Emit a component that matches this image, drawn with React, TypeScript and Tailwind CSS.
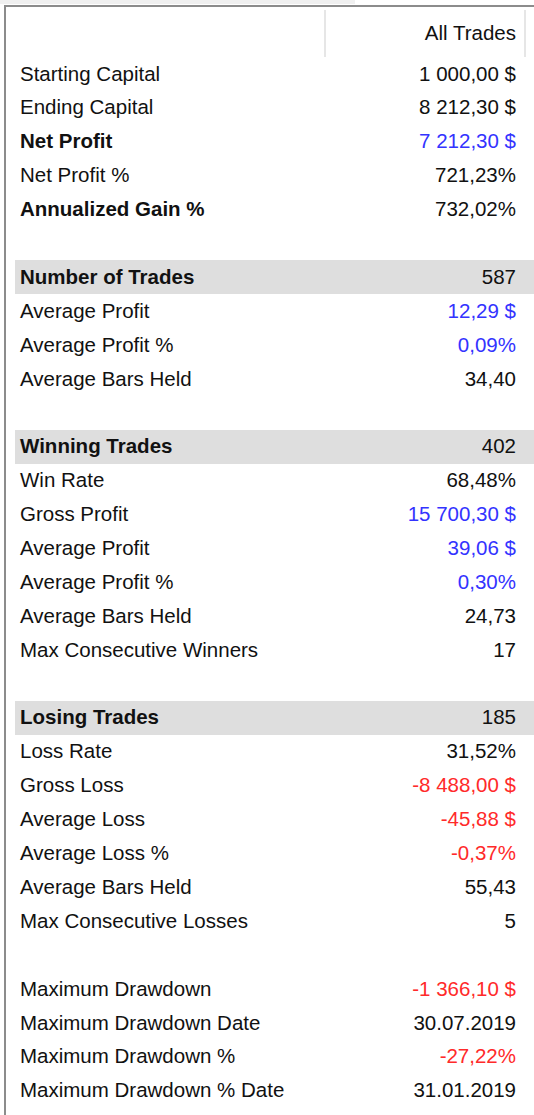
import React from "react";

type Row = { label?: string; value?: string; bold?: boolean; band?: boolean; color?: "blue" | "red" };

const rows: Row[] = [
  { label: "Starting Capital", value: "1 000,00 $" },
  { label: "Ending Capital", value: "8 212,30 $" },
  { label: "Net Profit", value: "7 212,30 $", bold: true, color: "blue" },
  { label: "Net Profit %", value: "721,23%" },
  { label: "Annualized Gain %", value: "732,02%", bold: true },
  {},
  { label: "Number of Trades", value: "587", bold: true, band: true },
  { label: "Average Profit", value: "12,29 $", color: "blue" },
  { label: "Average Profit %", value: "0,09%", color: "blue" },
  { label: "Average Bars Held", value: "34,40" },
  {},
  { label: "Winning Trades", value: "402", bold: true, band: true },
  { label: "Win Rate", value: "68,48%" },
  { label: "Gross Profit", value: "15 700,30 $", color: "blue" },
  { label: "Average Profit", value: "39,06 $", color: "blue" },
  { label: "Average Profit %", value: "0,30%", color: "blue" },
  { label: "Average Bars Held", value: "24,73" },
  { label: "Max Consecutive Winners", value: "17" },
  {},
  { label: "Losing Trades", value: "185", bold: true, band: true },
  { label: "Loss Rate", value: "31,52%" },
  { label: "Gross Loss", value: "-8 488,00 $", color: "red" },
  { label: "Average Loss", value: "-45,88 $", color: "red" },
  { label: "Average Loss %", value: "-0,37%", color: "red" },
  { label: "Average Bars Held", value: "55,43" },
  { label: "Max Consecutive Losses", value: "5" },
  {},
  { label: "Maximum Drawdown", value: "-1 366,10 $", color: "red" },
  { label: "Maximum Drawdown Date", value: "30.07.2019" },
  { label: "Maximum Drawdown %", value: "-27,22%", color: "red" },
  { label: "Maximum Drawdown % Date", value: "31.01.2019" },
];

export default function App() {
  return (
    <div
      className="w-[534px] h-[1115px] overflow-hidden bg-white text-[#111111]"
      style={{ fontFamily: '"Liberation Sans", Arial, sans-serif' }}
    >
      <div className="h-[4px] w-[355px] bg-[#f0f0f0]" />
      <div className="h-[1px]" />
      <div className="ml-[4px] border-t-2 border-l-2 border-[#8c8c8c] h-[1110px]">
        <div className="flex h-[50px] pt-[3px]">
          <div className="w-[320px] border-r-2 border-[#e6e6e6]" />
          <div className="w-[200px] border-r-2 border-[#e6e6e6] flex items-center justify-end pr-[8px] pb-[1px] text-[20.5px]">
            All Trades
          </div>
        </div>
        <div className="ml-[9px]">
          {rows.map((r, i) => (
            <div
              key={i}
              className={`flex h-[33.9px] items-center justify-between pl-[5px] pr-[18px] text-[20.5px] ${
                r.band ? "bg-[#dedede]" : ""
              }`}
            >
              <span className={r.bold ? "font-bold" : ""}>{r.label}</span>
              <span
                className={
                  r.color === "blue"
                    ? "text-[#3333ff]"
                    : r.color === "red"
                    ? "text-[#ff2a2a]"
                    : ""
                }
              >
                {r.value}
              </span>
            </div>
          ))}
        </div>
      </div>
    </div>
  );
}
